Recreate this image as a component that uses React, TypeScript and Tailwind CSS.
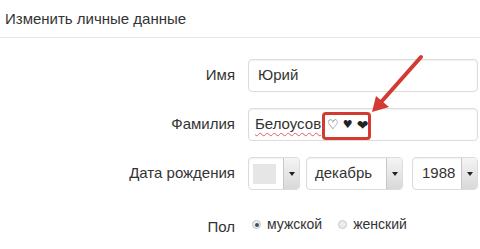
import React from 'react';

function Caret() {
  return (
    <div className="flex w-[16px] items-center justify-center self-stretch border-l border-[#c8c8c8] bg-gradient-to-b from-[#f4f4f4] to-[#d9d9d9]">
      <div className="h-0 w-0 border-x-[3px] border-t-[4px] border-x-transparent border-t-[#222]" />
    </div>
  );
}

function Select({ width, children }: { width: string; children?: React.ReactNode }) {
  return (
    <div className={`flex h-[33px] ${width} overflow-hidden rounded-[4px] border border-[#dcdcdc] bg-white shadow-[inset_0_1px_2px_rgba(0,0,0,0.06)]`}>
      <div className="flex flex-1 items-center">{children}</div>
      <Caret />
    </div>
  );
}

export default function App() {
  return (
    <div className="relative h-[249px] w-[480px] overflow-hidden bg-white font-['Liberation_Sans',Arial,sans-serif] text-[15px] text-[#333]">
      {/* Header */}
      <div className="flex h-[38px] items-center border-b border-[#e6e6e6] pl-[5px] pt-[1px]">
        <span className="text-[15px] text-[#333]">Изменить личные данные</span>
      </div>

      {/* Form */}
      <div className="grid grid-cols-[235px_230px] items-center gap-x-[13px] gap-y-[16px] pt-[21px]">
        <div className="text-right">Имя</div>
        <div className="flex h-[33px] items-center rounded-[4px] border border-[#dcdcdc] pl-[9px] shadow-[inset_0_1px_2px_rgba(0,0,0,0.06)]">
          Юрий
        </div>

        <div className="text-right">Фамилия</div>
        <div className="flex h-[33px] items-center rounded-[4px] border border-[#dcdcdc] pl-[6px] shadow-[inset_0_1px_2px_rgba(0,0,0,0.06)]">
          <span className="underline decoration-wavy decoration-[#e06060] decoration-1 underline-offset-[3px]">Белоусов</span>
          <span className="ml-[6px] flex items-center gap-[4px] font-['DejaVu_Sans',sans-serif] text-[#222]">
            <span className="text-[13px] leading-none text-[#333]">♡</span>
            <span className="text-[11px] leading-none">♥</span>
            <span className="text-[14px] leading-none">❤</span>
          </span>
        </div>

        <div className="text-right">Дата рождения</div>
        <div className="flex items-center">
          <Select width="w-[52px]">
            <div className="ml-[4px] h-[20px] w-[23px] bg-[#e6e6e6]" />
          </Select>
          <div className="ml-[6px]">
            <Select width="w-[97px]">
              <span className="pl-[8px]">декабрь</span>
            </Select>
          </div>
          <div className="ml-[9px]">
            <Select width="w-[66px]">
              <span className="pl-[9px]">1988</span>
            </Select>
          </div>
        </div>

        <div className="pt-[10px] text-right">Пол</div>
        <div className="flex items-center pt-[5px] text-[14px]">
          <span className="ml-[4px] flex h-[9px] w-[9px] items-center justify-center rounded-full border border-[#b8c0c8] bg-[#eef2f6]">
            <span className="h-[4px] w-[4px] rounded-full bg-[#3a5068]" />
          </span>
          <span className="ml-[6px]">мужской</span>
          <span className="ml-[16px] h-[9px] w-[9px] rounded-full border border-[#c8c8c8] bg-[#ececec]" />
          <span className="ml-[6px]">женский</span>
        </div>
      </div>

      {/* Annotation */}
      <div className="absolute left-[322px] top-[112px] h-[28px] w-[49px] rounded-[4px] border-[3px] border-[#d23a32]" />
      <svg className="absolute left-0 top-0" width="480" height="249" viewBox="0 0 480 249">
        <line x1="421" y1="57" x2="382" y2="101" stroke="#d23a32" strokeWidth="4" strokeLinecap="round" />
        <polygon points="372,112 376,96 389,107" fill="#d23a32" />
      </svg>
    </div>
  );
}
